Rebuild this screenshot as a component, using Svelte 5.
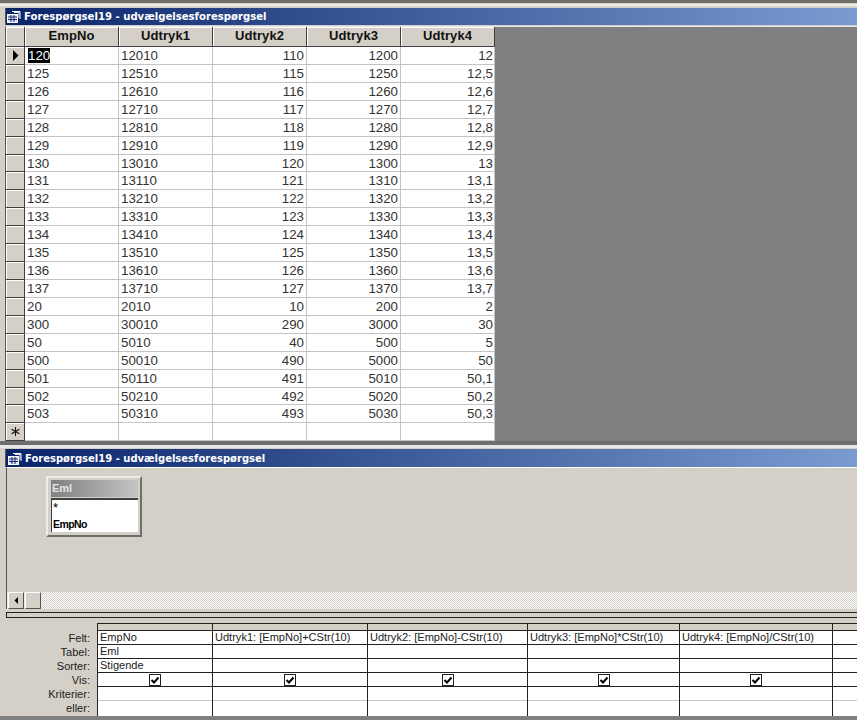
<script>
  const rows = [
    ['120','12010','110','1200','12'],['125','12510','115','1250','12,5'],['126','12610','116','1260','12,6'],
    ['127','12710','117','1270','12,7'],['128','12810','118','1280','12,8'],['129','12910','119','1290','12,9'],
    ['130','13010','120','1300','13'],['131','13110','121','1310','13,1'],['132','13210','122','1320','13,2'],
    ['133','13310','123','1330','13,3'],['134','13410','124','1340','13,4'],['135','13510','125','1350','13,5'],
    ['136','13610','126','1360','13,6'],['137','13710','127','1370','13,7'],['20','2010','10','200','2'],
    ['300','30010','290','3000','30'],['50','5010','40','500','5'],['500','50010','490','5000','50'],
    ['501','50110','491','5010','50,1'],['502','50210','492','5020','50,2'],['503','50310','493','5030','50,3']
  ];
  const heads = ['EmpNo','Udtryk1','Udtryk2','Udtryk3','Udtryk4'];
  const design = [
    ['EmpNo','Eml','Stigende'],
    ['Udtryk1: [EmpNo]+CStr(10)','',''],
    ['Udtryk2: [EmpNo]-CStr(10)','',''],
    ['Udtryk3: [EmpNo]*CStr(10)','',''],
    ['Udtryk4: [EmpNo]/CStr(10)','','']
  ];
  const title1 = 'Forespørgsel19 - udvælgelsesforespørgsel';
</script>

{#snippet icon()}
  <svg class="ticon" width="14" height="13" viewBox="0 0 14 13">
    <path d="M5 1.5H13V9" fill="none" stroke="#fff"/>
    <rect x="0.5" y="4.5" width="10" height="8" fill="#dfe6f2" stroke="#fff"/>
    <path d="M1 7H10M1 9.5H10M4 5V12M7 5V12" stroke="#1a2f6e" fill="none"/>
    <path d="M7 2.5H12V8" fill="none" stroke="#dfe6f2"/>
  </svg>
{/snippet}

<div class="screen">
  <div class="topstrip"></div>
  <section class="win1">
    <div class="titlebar">{@render icon()}<span>{title1}</span></div>
    <div class="sheetarea">
      <div class="sheet">
        <div class="selhead"></div>
        {#each heads as h}<div class="colhead">{h}</div>{/each}
        {#each rows as r, i}
          <div class="sel">
            {#if i === 0}
              <svg width="7" height="11" viewBox="0 0 7 11"><path d="M1 0L6.5 5.5L1 11Z" fill="#000"/></svg>
            {/if}
          </div>
          {#each r as c, j}
            <div class="cell" class:num={j > 1} class:edge={j === 4}>
              {#if i === 0 && j === 0}<span class="hilite">{c}</span>{:else}{c}{/if}
            </div>
          {/each}
        {/each}
        <div class="sel">
          <svg width="11" height="11" viewBox="0 0 11 11"><path d="M5.5 1V10M1.6 3.2L9.4 7.8M1.6 7.8L9.4 3.2" stroke="#111" stroke-width="1.1" fill="none"/></svg>
        </div>
        {#each heads as _}<div class="cell"></div>{/each}
      </div>
    </div>
  </section>
  <div class="gapband"></div>
  <section class="win2">
    <div class="titlebar t2">{@render icon()}<span>{title1}</span></div>
    <div class="inner">
      <div class="canvas">
        <div class="tablebox">
          <div class="boxtitle">Eml</div>
          <div class="boxlist"><div class="ast">*</div><div class="b">EmpNo</div></div>
        </div>
      </div>
      <div class="hscroll">
        <div class="sbtn"><svg width="5" height="7" viewBox="0 0 5 7"><path d="M4 0V7L0.5 3.5Z" fill="#000"/></svg></div>
        <div class="sbtn thumb"></div>
        <div class="hatch"></div>
      </div>
    </div>
    <div class="splitter"></div>
    <div class="designer">
      <div class="labels">
        <div></div><div>Felt:</div><div>Tabel:</div><div>Sorter:</div><div>Vis:</div><div>Kriterier:</div><div>eller:</div>
      </div>
      <div class="qgrid">
        {#each [...design, ['', '', '']] as col, ci}
          <div class="qcol" class:last={ci === 5}>
            <div class="qhead"></div>
            <div class="q">{col[0]}</div>
            <div class="q">{col[1]}</div>
            <div class="q">{col[2]}</div>
            <div class="q vis">
              {#if ci < 5}
                <svg width="12" height="12" viewBox="0 0 12 12"><rect x="0.5" y="0.5" width="11" height="11" fill="#fff" stroke="#222"/><path d="M2.5 6L5 8.5L9.5 3.5" fill="none" stroke="#000" stroke-width="2"/></svg>
              {/if}
            </div>
            <div class="q light"></div>
            <div class="q light end"></div>
          </div>
        {/each}
      </div>
    </div>
  </section>
  <div class="bottomband"></div>
</div>

<style>
  :global(body) { margin: 0; background: #808080; }
  .screen { width: 857px; height: 720px; overflow: hidden; display: flex; flex-direction: column; background: #d4d0c8; font-family: "Liberation Sans", Arial, sans-serif; }
  .topstrip { height: 3px; background: #6f6e69; flex: none; }
  .win1 { flex: none; height: 438px; padding: 5px 0 0 5px; background: linear-gradient(#d4d0c8 0 1px, #eeece8 1px 3px, #d4d0c8 3px); box-sizing: border-box; display: flex; flex-direction: column; }
  .titlebar { height: 17px; flex: none; display: flex; align-items: center; gap: 3px; padding-left: 1px; background: linear-gradient(90deg, #0a246a, #7a9bd0); border-left: 1px solid #555; color: #fff; font: bold 10.1px "DejaVu Sans", sans-serif; white-space: nowrap; box-sizing: border-box; }
  .ticon { flex: none; }
  .sheetarea { flex: 1; min-height: 0; background: #808080; border-top: 1px solid #e8e8ec; border-left: 1px solid #555; margin-top: 1px; overflow: hidden; }
  .sheet { display: grid; grid-template-columns: 19px repeat(5, 94px); grid-template-rows: 20px; grid-auto-rows: 17.93px; width: max-content; background: #fff; }
  .selhead, .sel, .colhead { background: #d4d0c8; box-sizing: border-box; border-right: 1px solid #404040; border-bottom: 1px solid #404040; box-shadow: inset 1px 1px 0 #fff; }
  .colhead { text-align: center; font: bold 13px/18px "Liberation Sans", sans-serif; color: #111; letter-spacing: 0.1px; }
  .sel { display: flex; align-items: center; justify-content: center; }
  .cell { box-sizing: border-box; border-right: 1px solid #c4c4c4; border-bottom: 1px solid #c4c4c4; font-size: 13.3px; line-height: 17px; padding: 0 2px; color: #333; background: #fff; white-space: nowrap; }
  .num { text-align: right; padding-right: 2px; }
  .edge { padding-right: 1px; }
  .hilite { background: #000; color: #fff; display: inline-block; line-height: 15px; margin-left: 1px; }
  .gapband { flex: none; height: 4px; background: #6e6e6e; }
  .win2 { flex: none; height: 271px; display: flex; flex-direction: column; background: linear-gradient(#e8e8e8 0 3px, #d4d0c8 3px); padding: 4px 0 0 5px; box-sizing: border-box; }
  .t2 { height: 18px; font-size: 10px; padding-left: 2px; }
  .inner { flex: none; height: 142px; margin-left: 1px; display: flex; flex-direction: column; border-left: 1px solid #555; border-top: 1px solid #fff; box-sizing: border-box; }
  .canvas { flex: 1; position: relative; }
  .tablebox { position: absolute; left: 39px; top: 8px; width: 96px; height: 61px; box-sizing: border-box; background: #d4d0c8; border: 2px solid; border-color: #eeece8 #6e6e6a #6e6e6a #eeece8; padding: 2px 2px 3px 3px; }
  .boxtitle { height: 17px; background: linear-gradient(90deg, #808080, #c4c4c4); color: #e4e4e4; font: bold 11px/17px "Liberation Sans", sans-serif; padding-left: 1px; }
  .boxlist { border-top: 2px solid #404040; border-left: 1px solid #404040; margin-top: 1px; height: 34px; box-sizing: border-box; background: #fff; font-size: 10.5px; line-height: 16px; padding-left: 1px; color: #000; }
  .ast { font-size: 13px; }
  .b { font-weight: bold; letter-spacing: -0.6px; }
  .hscroll { flex: none; height: 17px; padding-left: 1px; display: flex; background-color: #eae8e3; background-image: repeating-conic-gradient(#d4d0c8 0 25%, #fff 0 50%); background-size: 2px 2px; }
  .sbtn { width: 16px; height: 17px; box-sizing: border-box; background: #d4d0c8; border: 1px solid; border-color: #fff #555 #555 #fff; display: flex; align-items: center; justify-content: center; flex: none; }
  .thumb { margin-left: 1px; }
  .hatch { flex: 1; }
  .splitter { flex: none; height: 6px; margin-top: 3px; margin-left: 1px; background: #d4d0c8; border-top: 1px solid #222; border-bottom: 1px solid #222; border-left: 1px solid #222; box-sizing: border-box; }
  .designer { flex: 1; display: flex; padding-top: 5px; min-height: 0; }
  .labels { width: 85px; flex: none; box-sizing: border-box; text-align: right; font-size: 11.05px; display: grid; grid-template-rows: 8px repeat(6, 14px); align-items: center; color: #222; }
  .qgrid { display: flex; margin-left: 7px; flex: none; }
  .qcol { box-sizing: border-box; border-right: 1px solid #222; background: #fff; flex: none; position: relative; }
  .qcol:first-child { width: 116px; border-left: 1px solid #222; }
  .qcol:nth-child(2) { width: 155px; }
  .qcol:nth-child(3) { width: 160px; }
  .qcol:nth-child(4) { width: 152px; }
  .qcol:nth-child(5) { width: 153px; }
  .qcol.last { width: 40px; border-right: 0; }
  .qhead { height: 8px; box-sizing: border-box; background: #d4d0c8; border-top: 1px solid #222; border-bottom: 1px solid #222; }
  .q { height: 14px; box-sizing: border-box; border-bottom: 1px solid #222; font-size: 11.05px; line-height: 13px; padding-left: 2px; white-space: nowrap; color: #222; }
  .q.vis { display: flex; align-items: center; justify-content: center; padding: 0; }
  .q.light { border-bottom-color: #c8c8c8; }
  .q.end { border-bottom: 0; height: 15px; }
  .bottomband { flex: none; height: 4px; background: #808080; }
</style>
